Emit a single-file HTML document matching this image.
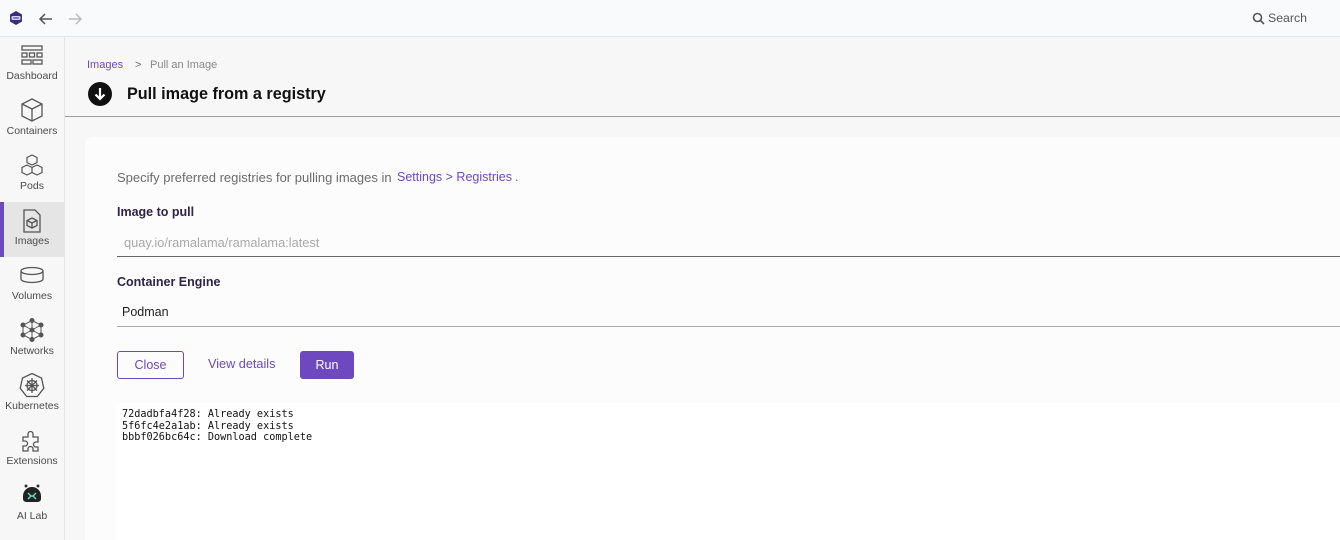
<!DOCTYPE html>
<html><head><meta charset="utf-8"><style>
*{box-sizing:border-box;margin:0;padding:0}
body{width:1340px;height:540px;overflow:hidden;background:#f7f7f7;font-family:"Liberation Sans",sans-serif;position:relative}
.top{position:absolute;left:0;top:0;width:1340px;height:37px;background:#f9fafb;border-bottom:1px solid #e4e4e7}
.side{position:absolute;left:0;top:37px;width:65px;height:503px;background:#f7f7f7;border-right:1px solid #e4e4e7}
.nav{position:absolute;left:0;width:64px;height:55px;text-align:center;font-size:10.5px;color:#4b4b4b}
.nav svg{display:block;margin:0 auto}
.nav span{position:absolute;left:0;right:0;bottom:10px}
.act{background:#e5e5e5}
.act:before{content:"";position:absolute;left:0;top:0;width:4px;height:55px;background:#6d48bf}
.t{position:absolute;white-space:nowrap}
.card{position:absolute;left:85px;top:137px;width:1255px;height:403px;background:#fcfcfc;border-radius:8px 0 0 0}
.log{position:absolute;left:117px;top:403px;width:1223px;height:137px;background:#fff;font-family:"DejaVu Sans Mono","Liberation Mono",monospace;font-size:10.2px;line-height:11.5px;color:#111;padding:6px 0 0 5px;white-space:pre}
</style></head><body>
<div class="top">
<svg style="position:absolute;left:8px;top:10px" width="16" height="16" viewBox="0 0 16 16"><path d="M8 1l6 3.5v7L8 15l-6-3.5v-7z" fill="#3b2b7a"/><rect x="3.5" y="6" width="9" height="4" rx="1" fill="#cbd5ff"/><path d="M5 8h6" stroke="#3b2b7a" stroke-width="1"/></svg>
<svg style="position:absolute;left:38px;top:11px" width="16" height="16" viewBox="0 0 16 16" fill="none" stroke="#555" stroke-width="1.5"><path d="M14 8H2M7 3L2 8l5 5"/></svg>
<svg style="position:absolute;left:67px;top:11px" width="16" height="16" viewBox="0 0 16 16" fill="none" stroke="#bbb" stroke-width="1.5"><path d="M2 8h12M9 3l5 5-5 5"/></svg>
<svg style="position:absolute;left:1252px;top:12px" width="13" height="13" viewBox="0 0 13 13" fill="none" stroke="#555" stroke-width="1.6"><circle cx="5.5" cy="5.5" r="4"/><path d="M8.5 8.5L12 12"/></svg>
<div class="t" style="left:1268px;top:11px;font-size:12.3px;color:#555">Search</div>
</div>
<div class="side">
<div class="nav" style="top:0"><svg style="margin-top:8px" width="24" height="22" viewBox="0 0 24 22" fill="none" stroke="#555" stroke-width="1.3"><rect x="2" y="1" width="20" height="4"/><rect x="2" y="8" width="5" height="4"/><rect x="9.5" y="8" width="5" height="4"/><rect x="17" y="8" width="5" height="4"/><rect x="2" y="15" width="9" height="4"/><rect x="13" y="15" width="9" height="4"/></svg><span>Dashboard</span></div>
<div class="nav" style="top:55px"><svg style="margin-top:5px" width="26" height="26" viewBox="0 0 26 26" fill="none" stroke="#555" stroke-width="1.3"><path d="M13 2l10 5v12l-10 5-10-5V7zM3 7l10 5 10-5M13 12v12"/></svg><span>Containers</span></div>
<div class="nav" style="top:110px"><svg style="margin-top:6px" width="24" height="24" viewBox="0 0 24 24" fill="none" stroke="#555" stroke-width="1.2"><path d="M12 2l5 2.5v5L12 12 7 9.5v-5zM7 12l5 2.5v5L7 22l-5-2.5v-5zM17 12l5 2.5v5L17 22l-5-2.5v-5z"/></svg><span>Pods</span></div>
<div class="nav act" style="top:165px"><svg style="margin-top:6px" width="22" height="26" viewBox="0 0 22 26" fill="none" stroke="#555" stroke-width="1.3"><path d="M3 2h11l5 5v17H3z"/><path d="M11 10l5 2.5v5L11 20l-5-2.5v-5zM6 12.5l5 2.5 5-2.5M11 15v5"/></svg><span>Images</span></div>
<div class="nav" style="top:220px"><svg style="margin-top:9px" width="26" height="18" viewBox="0 0 26 18" fill="none" stroke="#555" stroke-width="1.3"><ellipse cx="13" cy="5" rx="11" ry="3.5"/><path d="M2 5v8c0 2 5 3.5 11 3.5S24 15 24 13V5"/></svg><span>Volumes</span></div>
<div class="nav" style="top:275px"><svg style="margin-top:6px" width="24" height="24" viewBox="0 0 24 24" fill="#555" stroke="#555" stroke-width="1"><circle cx="12" cy="2.5" r="2"/><circle cx="21" cy="7" r="2"/><circle cx="21" cy="17" r="2"/><circle cx="12" cy="21.5" r="2"/><circle cx="3" cy="17" r="2"/><circle cx="3" cy="7" r="2"/><circle cx="12" cy="12" r="2"/><path fill="none" d="M12 2.5L21 7v10l-9 4.5L3 17V7zM12 2.5v19M3 7l18 10M21 7L3 17"/></svg><span>Networks</span></div>
<div class="nav" style="top:330px"><svg style="margin-top:5px" width="26" height="26" viewBox="0 0 26 26" fill="none" stroke="#555" stroke-width="1.3"><path d="M13 1.5l9.5 4.6 2.3 10.2-6.5 8.2H7.7l-6.5-8.2L3.5 6.1z"/><circle cx="13" cy="13.5" r="5"/><path d="M13 6v15M6 13.5h14M8 8.5l10 10M18 8.5l-10 10"/></svg><span>Kubernetes</span></div>
<div class="nav" style="top:385px"><svg style="margin-top:5px" width="26" height="26" viewBox="0 0 26 26" fill="none" stroke="#555" stroke-width="1.3"><path d="M4 10h5V7a2.5 2.5 0 015 0v3h5v5h-2a2.5 2.5 0 000 5h2v4h-5v-2a2.5 2.5 0 00-5 0v2H4v-5h2a2.5 2.5 0 000-5H4z"/></svg><span>Extensions</span></div>
<div class="nav" style="top:440px"><svg style="margin-top:6px" width="22" height="22" viewBox="0 0 22 22"><circle cx="5" cy="3" r="1.5" fill="#333"/><circle cx="17" cy="3" r="1.5" fill="#333"/><path d="M2 13a9 9 0 0118 0v3c0 2-2 3-4 3H6c-2 0-4-1-4-3z" fill="#222"/><path d="M7 10l3 3-3 3M15 10l-3 3 3 3M10 13h2" stroke="#5fe3c4" stroke-width="1.4" fill="none"/></svg><span>AI Lab</span></div>
</div>
<div class="t" style="left:87px;top:59px;font-size:11px;color:#6d48bf">Images</div>
<div class="t" style="left:135px;top:59px;font-size:11px;color:#6b6b6b">&gt;</div>
<div class="t" style="left:150px;top:59px;font-size:11px;color:#888">Pull an Image</div>
<svg style="position:absolute;left:88px;top:82px" width="24" height="24" viewBox="0 0 24 24"><circle cx="12" cy="12" r="12" fill="#111"/><path d="M12 6v11M7.5 12.5L12 17l4.5-4.5" stroke="#fff" stroke-width="2.2" fill="none"/></svg>
<div class="t" style="left:127px;top:85px;font-size:16.2px;font-weight:bold;color:#111">Pull image from a registry</div>
<div style="position:absolute;left:65px;top:116px;width:1275px;height:1px;background:#a0a0a0"></div>
<div class="card"></div>
<div class="t" style="left:117px;top:170px;font-size:13px;color:#6b6b6b">Specify preferred registries for pulling images in</div>
<div class="t" style="left:397px;top:170px;font-size:12.5px;color:#6d48bf">Settings &gt; Registries</div>
<div class="t" style="left:515px;top:170px;font-size:12.5px;color:#6b6b6b">.</div>
<div class="t" style="left:117px;top:205px;font-size:12.5px;font-weight:bold;color:#2f2447">Image to pull</div>
<div class="t" style="left:124px;top:235px;font-size:12.8px;color:#a8a8a8">quay.io/ramalama/ramalama:latest</div>
<div style="position:absolute;left:117px;top:256px;width:1223px;height:1px;background:#666"></div>
<div class="t" style="left:117px;top:275px;font-size:12.5px;font-weight:bold;color:#2f2447">Container Engine</div>
<div class="t" style="left:122px;top:305px;font-size:12.5px;color:#222">Podman</div>
<div style="position:absolute;left:117px;top:326px;width:1223px;height:1px;background:#aaa"></div>
<div style="position:absolute;left:117px;top:351px;width:67px;height:28px;border:1px solid #6d48bf;border-radius:3px;font-size:12.5px;color:#6d48bf;text-align:center;line-height:26px">Close</div>
<div class="t" style="left:208px;top:357px;font-size:12.7px;color:#6d48bf">View details</div>
<div style="position:absolute;left:300px;top:351px;width:54px;height:28px;background:#6d48bf;border-radius:3px;font-size:12.5px;color:#fff;text-align:center;line-height:28px">Run</div>
<div class="log">72dadbfa4f28: Already exists
5f6fc4e2a1ab: Already exists
bbbf026bc64c: Download complete</div>
</body></html>
